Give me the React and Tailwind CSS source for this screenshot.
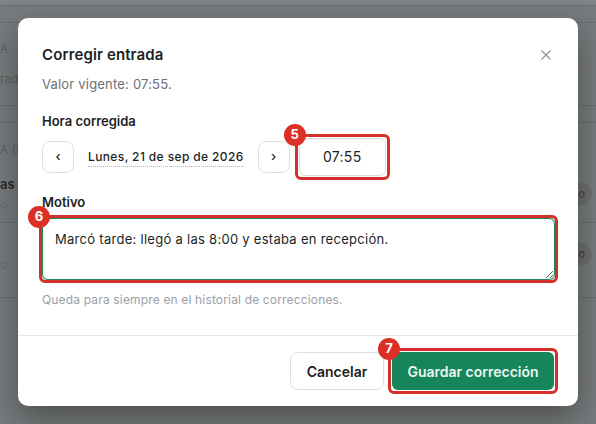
import React from "react";

function Badge({ n, className }) {
  return (
    <span className={`absolute flex h-[22px] w-[22px] items-center justify-center rounded-full bg-[#dc2f26] text-[13px] font-bold text-white ${className}`}>
      {n}
    </span>
  );
}

function Pill({ className }) {
  return (
    <span className={`absolute right-[4px] flex h-[22px] w-[30px] items-center justify-end rounded-full bg-[#6d7072] pr-[7px] text-[11px] text-[#3c3e40] ${className}`}>
      o
    </span>
  );
}

function Ghost() {
  return (
    <div className="relative flex h-full w-full flex-col bg-[#787b7d] text-[#5e6163] blur-[0.4px]">
      <div className="h-[6px] border-b border-[#6b6e70] bg-[#808385]" />
      <div className="h-[17px] border-b border-[#696c6e]" />
      <div className="flex h-[83px] flex-col border-b border-[#696c6e] pt-[18px] text-xs">
        <span className="leading-4">A</span>
        <span className="mt-[14px] leading-4">rada</span>
      </div>
      <div className="h-[17px] border-b border-[#696c6e]" />
      <div className="relative flex h-[100px] flex-col border-b border-[#696c6e] pt-[19px] text-xs">
        <span className="leading-4">A (E</span>
        <span className="mt-[18px] text-[13px] font-bold leading-4 text-[#2b2d2f]">as</span>
        <span className="mt-[5px] leading-4 text-[#6a6d6f]">o</span>
      </div>
      <div className="h-[75px] border-b border-[#696c6e] pt-[34px] text-xs">
        <span className="leading-4 text-[#6a6d6f]">o</span>
      </div>
      <Pill className="top-[183px]" />
      <Pill className="top-[243px]" />
    </div>
  );
}

export default function App() {
  return (
    <div className="relative h-[424px] w-[596px] overflow-hidden bg-[#787b7d] font-['Inter',sans-serif]">
      <div className="absolute inset-0"><Ghost /></div>
      <div className="absolute left-[18px] top-[18px] flex h-[388px] w-[560px] flex-col rounded-[10px] bg-white shadow-[0_12px_32px_rgba(0,0,0,0.38)]">
        <div className="flex flex-1 flex-col pl-[24px] pr-[26px] pt-[26px]">
          <div className="flex items-center justify-between">
            <h2 className="text-[15px] font-semibold leading-[22px] tracking-[0.12px] text-[#1c1f23]">Corregir entrada</h2>
            <svg width="10" height="10" viewBox="0 0 10 10" className="mr-[1px] text-[#8a8f94]" fill="none" stroke="currentColor" strokeWidth="1.1">
              <path d="M0.5 0.5l9 9M9.5 0.5l-9 9" />
            </svg>
          </div>
          <p className="mt-[8px] text-[13px] leading-5 tracking-[0.2px] text-[#6b7177]">Valor vigente: 07:55.</p>
          <label className="mt-[17px] text-[13px] font-semibold leading-5 text-[#1c1f23]">Hora corregida</label>
          <div className="mt-[3px] flex items-center">
            <button className="flex h-8 w-8 items-center justify-center rounded-lg border border-[#dcdfe2] text-[13px] font-medium text-[#1c1f23]">‹</button>
            <span className="ml-[14px] border-b border-dotted border-[#b6babe] text-[12px] font-medium leading-[18px] tracking-[0.38px] text-[#1c1f23]">Lunes, 21 de sep de 2026</span>
            <button className="ml-[14px] flex h-8 w-8 items-center justify-center rounded-lg border border-[#dcdfe2] text-[13px] font-medium text-[#1c1f23]">›</button>
            <div className="relative ml-[5px] h-[46px] w-[95px] rounded-md border-[3px] border-[#d4302a] p-[1px]">
              <div className="flex h-full w-full items-center justify-center rounded-md border border-[#e2d9d6] text-sm tracking-[0.3px] text-[#1c1f23]">07:55</div>
              <Badge n="5" className="-left-[14px] -top-[13px]" />
            </div>
          </div>
          <label className="mt-[12px] text-[13px] font-semibold leading-5 text-[#1c1f23]">Motivo</label>
          <div className="relative -ml-[3px] mt-[3px] h-[68px] w-[519px] rounded-md border-[3px] border-[#d4302a] bg-[#bfe0d0]">
            <textarea
              readOnly
              value="Marcó tarde: llegó a las 8:00 y estaba en recepción."
              className="block h-full w-full rounded-md border border-[#1a8a5e] bg-white px-[12px] py-[10px] text-[13px] leading-5 tracking-[0.28px] text-[#1c1f23] outline-none"
            />
            <Badge n="6" className="-left-[14px] -top-[12px]" />
          </div>
          <p className="mt-[7px] text-xs leading-5 tracking-[0.16px] text-[#9ba0a5]">Queda para siempre en el historial de correcciones.</p>
        </div>
        <div className="flex h-[71px] items-center justify-end border-t border-[#e6e7e9] pl-6 pr-[20px]">
          <button className="h-[38px] w-[94px] rounded-lg border border-[#dcdfe2] pt-[1px] text-sm font-semibold text-[#1c1f23]">Cancelar</button>
          <div className="relative ml-[4px] h-[46px] w-[170px] rounded-md border-[3px] border-[#d4302a] p-[1px]">
            <button className="h-full w-full rounded-md bg-[#17855c] pt-[1px] text-sm font-semibold text-[#eaf6f0]">Guardar corrección</button>
            <Badge n="7" className="-left-[13px] -top-[13px]" />
          </div>
        </div>
      </div>
    </div>
  );
}
